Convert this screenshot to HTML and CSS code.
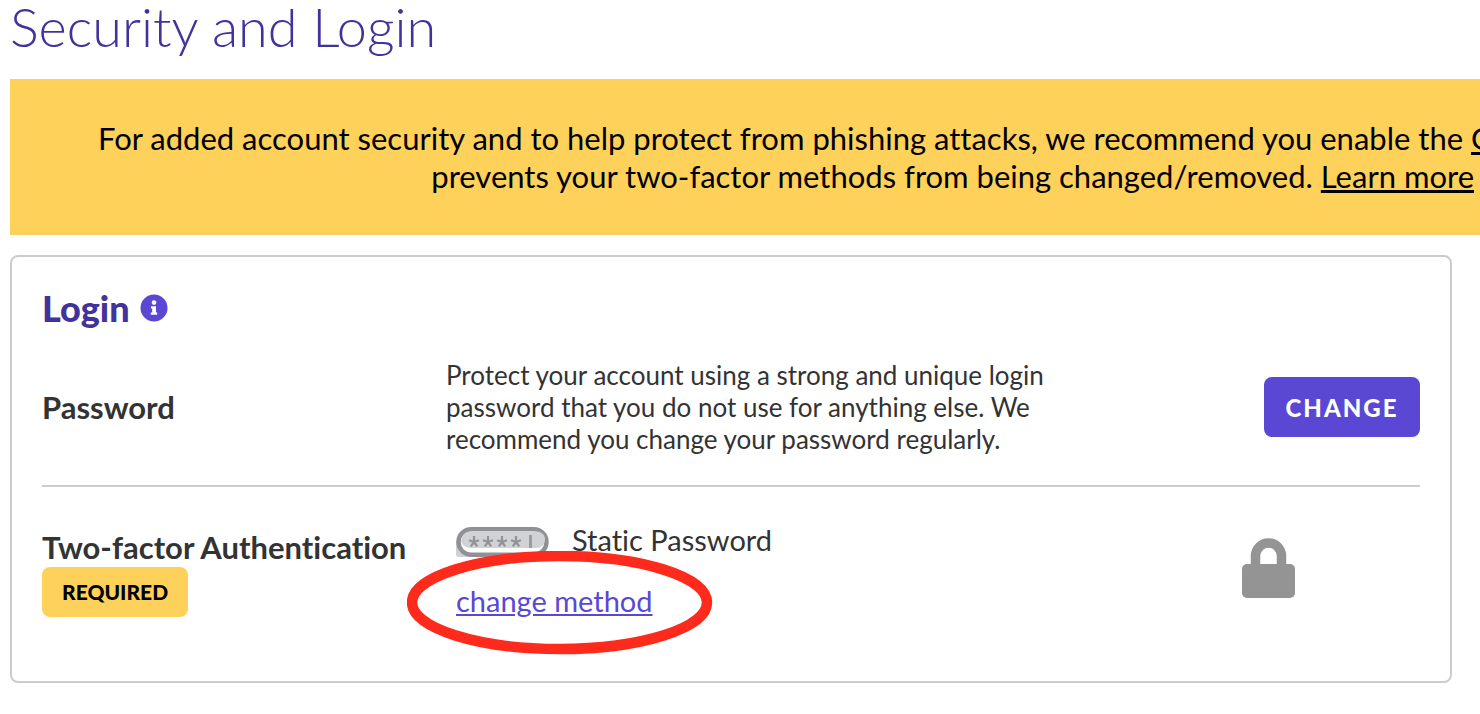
FILE: index.html
```html
<!DOCTYPE html>
<html lang="en">
<head>
    <meta charset="UTF-8">
    <meta name="viewport" content="width=device-width, initial-scale=1.0">
    <title>Security and Login</title>
    <link rel="stylesheet" href="styles.css">
</head>
<body>

    <h1 class="page-title">Security and Login</h1>

    <div class="banner">
        <p class="banner-line">For added account security and to help protect from phishing attacks, we recommend you enable the <a href="#">G</a></p>
        <p class="banner-line banner-line-end">prevents your two-factor methods from being changed/removed. <a href="#">Learn more</a></p>
    </div>

    <section class="card">
        <h2 class="card-title">
            Login
            <svg class="info-icon" viewBox="0 0 28 28" aria-hidden="true">
                <circle cx="14" cy="14" r="13.5" fill="#5a48d4"/>
                <circle cx="14" cy="8.6" r="2.3" fill="#fff"/>
                <path d="M11 12.2h5v6.2h1.2v2.4h-6.4v-2.4h1.4v-3.8H11z" fill="#fff"/>
            </svg>
        </h2>

        <div class="row">
            <h3 class="row-label">Password</h3>
            <p class="row-text">Protect your account using a strong and unique login<br>password that you do not use for anything else. We<br>recommend you change your password regularly.</p>
            <button class="change-btn" type="button">CHANGE</button>
        </div>

        <div class="row row-auth">
            <div class="auth-label">
                <h3 class="row-label">Two-factor Authentication</h3>
                <span class="tag">REQUIRED</span>
            </div>
            <div class="method">
                <div class="method-name">
                    <svg class="password-icon" viewBox="0 0 94 30" aria-hidden="true">
                        <path d="M0 14v13q0 3 3 3h40V14z" fill="#cfd0d2"/>
                        <rect x="2.5" y="2.2" width="88" height="25.5" rx="12.7" fill="#fff" stroke="#8f9194" stroke-width="4.4"/>
                        <path d="M5 15Q6 4 17 4h60q12 0 12 9-1 8-9 8H16q-8 0-11-6z" fill="#d1d2d4"/>
                        <g stroke="#929395" stroke-width="2.2">
                            <path id="star" d="M18 9v6M18 15l-5-1.8M18 15l5-1.8M18 15l-3.2 4.4M18 15l3.2 4.4"/>
                            <use href="#star" x="14"/>
                            <use href="#star" x="28"/>
                            <use href="#star" x="42"/>
                        </g>
                        <path d="M74.5 8v13" stroke="#9b9c9e" stroke-width="3"/>
                    </svg>
                    <span>Static Password</span>
                </div>
                <a class="method-link" href="#">change method</a>
                <!-- highlight ring -->
                <svg class="ring" viewBox="0 0 306 104" aria-hidden="true">
                    <ellipse cx="152.5" cy="51.5" rx="147.5" ry="46.5" fill="none" stroke="#fe2b1d" stroke-width="10.5"/>
                </svg>
            </div>
            <svg class="lock-icon" viewBox="0 0 54 62" aria-hidden="true">
                <path d="M14.5 30V19a13 13 0 0 1 26 0v11" fill="none" stroke="#949494" stroke-width="9.5"/>
                <rect x="1" y="27" width="53" height="34" rx="5" fill="#949494"/>
            </svg>
        </div>
    </section>

</body>
</html>
```
FILE: styles.css
```css
* {
    margin: 0;
    padding: 0;
    box-sizing: border-box;
}

body {
    padding-left: 10px;
    overflow-x: hidden;
    background: #fff;
    color: #333;
    font-family: Lato, "Liberation Sans", sans-serif;
    font-variant-ligatures: none;
}

.page-title {
    color: #41339c;
    font-size: 54px;
    font-weight: 300;
    line-height: 54px;
}

/* notice */
.banner {
    margin-top: 25px;
    padding: 40px 6px 40px 88px;
    overflow: hidden;
    background: #fed15b;
    color: #000;
}
.banner-line {
    font-size: 31px;
    line-height: 38px;
    white-space: nowrap;
}
.banner-line-end {
    text-align: right;
}
.banner a {
    color: #000;
}

/* login card */
.card {
    margin: 20px 28px 30px 0;
    padding: 30px;
    border: 2px solid #ccc;
    border-radius: 8px;
}
.card-title {
    display: flex;
    align-items: center;
    gap: 10px;
    color: #41339c;
    font-size: 36px;
    font-weight: 900;
    line-height: 42px;
}
.info-icon {
    width: 28px;
    height: 28px;
}

.row {
    display: grid;
    grid-template-columns: 404px 1fr auto;
    align-items: center;
    padding: 30px 0;
}
.row-label {
    font-size: 31px;
    font-weight: 700;
    line-height: 40px;
}
.row-text {
    font-size: 26px;
    line-height: 32px;
}
.change-btn {
    width: 156px;
    height: 60px;
    border: 0;
    border-radius: 8px;
    background: #5a48d4;
    color: #fff;
    font-family: inherit;
    font-size: 24px;
    font-weight: 900;
    letter-spacing: 2px;
    cursor: pointer;
}

.row-auth {
    align-items: start;
    padding: 40px 0 32px;
    border-top: 2px solid #ccc;
}
.tag {
    display: inline-block;
    padding: 0 20px;
    border-radius: 8px;
    background: #fed15b;
    color: #000;
    font-size: 21px;
    font-weight: 900;
    line-height: 50px;
}
.method {
    position: relative;
    padding-left: 10px;
    font-size: 29px;
}
.method-name {
    display: flex;
    gap: 22px;
    margin-bottom: 26px;
    line-height: 26px;
}
.password-icon {
    width: 94px;
    height: 30px;
}
.method-link {
    color: #5a48d4;
    line-height: 36px;
}
.ring {
    position: absolute;
    top: 24px;
    left: -39px;
    width: 306px;
    height: 104px;
    pointer-events: none;
}
.lock-icon {
    width: 54px;
    height: 62px;
    margin: 10px 125px 0 0;
}
```
